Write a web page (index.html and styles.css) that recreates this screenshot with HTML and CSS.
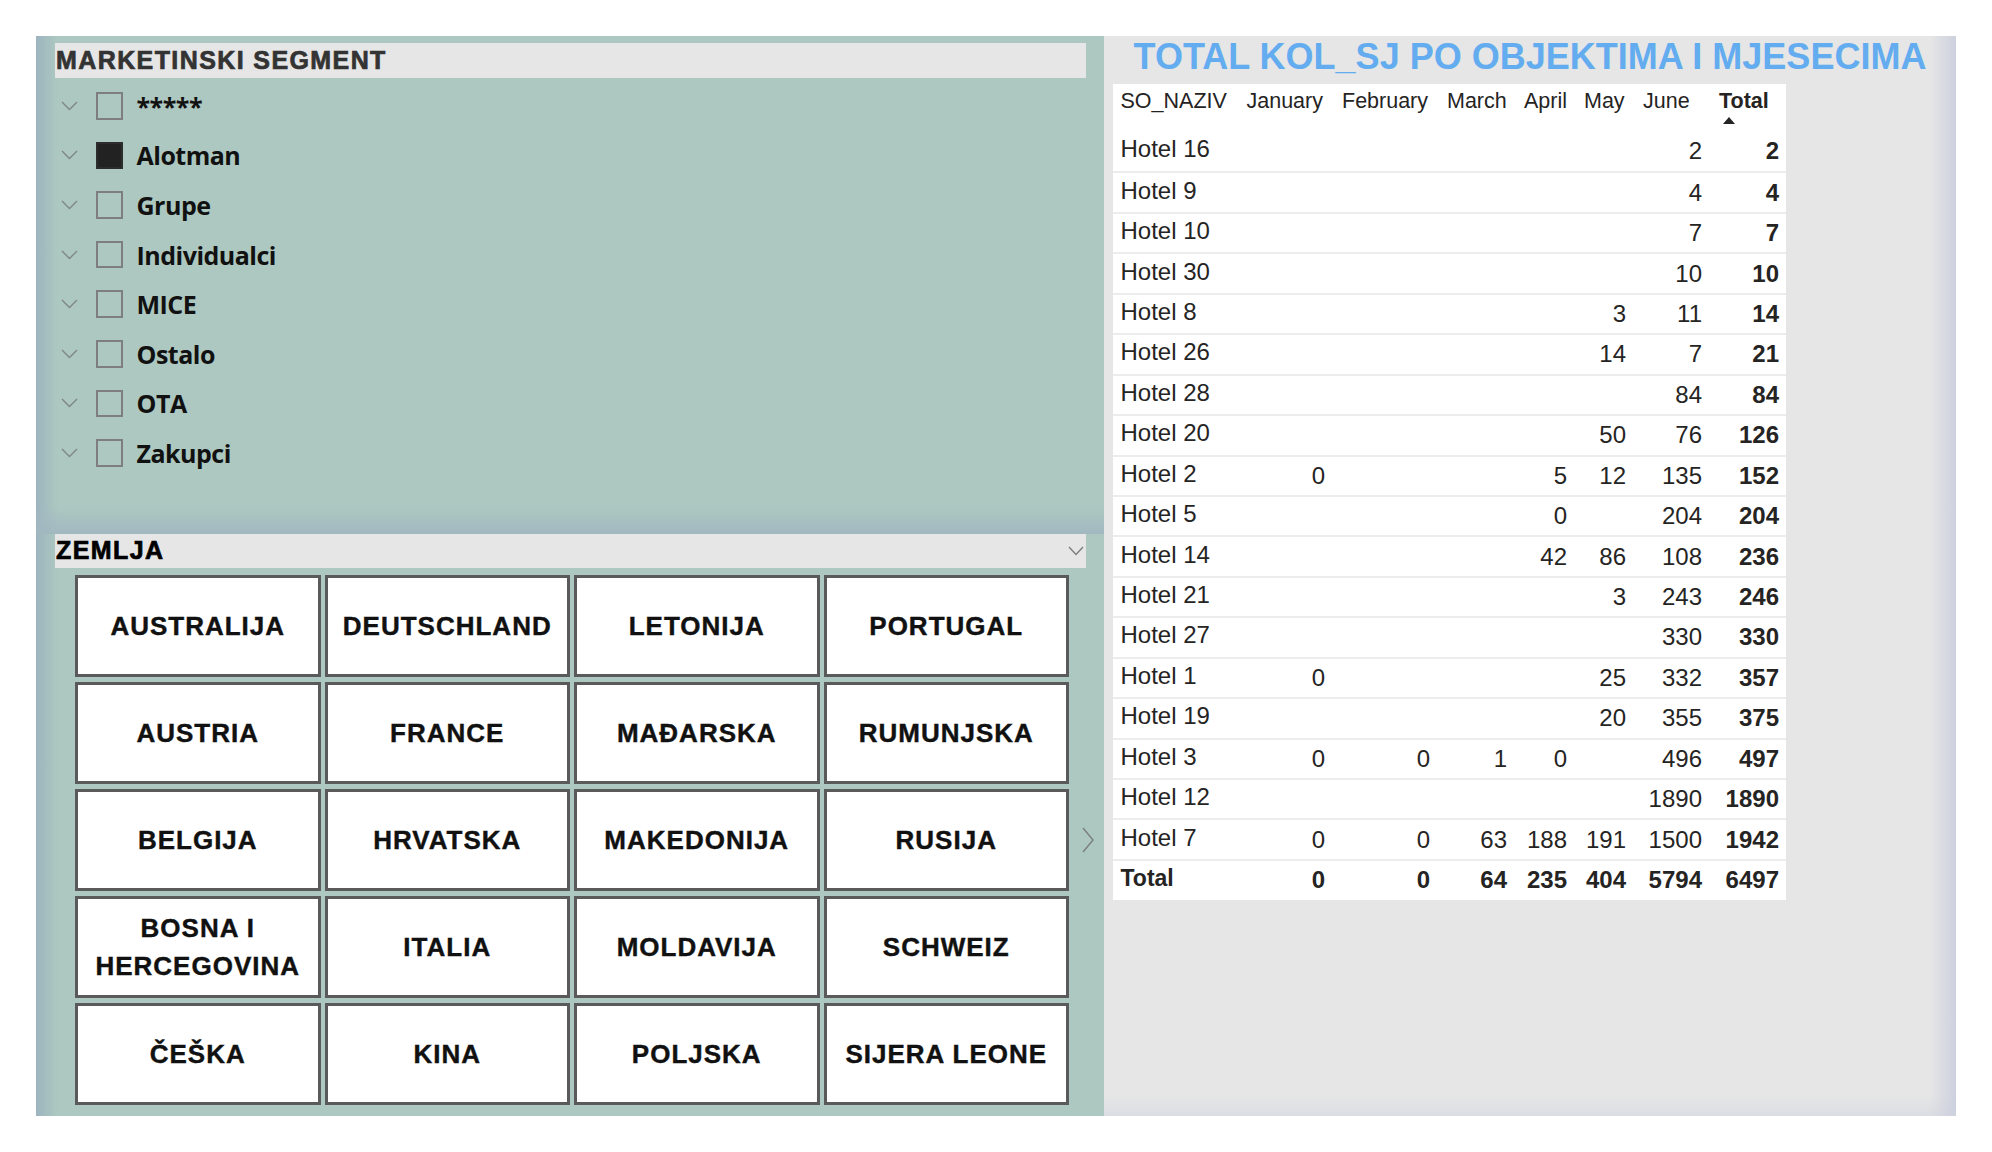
FILE: index.html
```html
<!DOCTYPE html>
<html lang="hr">
<head>
    <meta charset="UTF-8">
    <title>Total kol_sj po objektima</title>
    <link rel="stylesheet" href="styles.css">
</head>
<body>
<div class="report">

    <section class="left-panel">
        <div class="slicer segment">
            <div class="slicer-title">MARKETINSKI SEGMENT</div>
            <ul class="items">
                <li class="item"><svg class="chev" width="17" height="10" viewBox="0 0 17 10"><polyline points="1,1 8.5,8.5 16,1"/></svg><span class="box"></span><span class="label">*****</span></li>
                <li class="item"><svg class="chev" width="17" height="10" viewBox="0 0 17 10"><polyline points="1,1 8.5,8.5 16,1"/></svg><span class="box checked"></span><span class="label">Alotman</span></li>
                <li class="item"><svg class="chev" width="17" height="10" viewBox="0 0 17 10"><polyline points="1,1 8.5,8.5 16,1"/></svg><span class="box"></span><span class="label">Grupe</span></li>
                <li class="item"><svg class="chev" width="17" height="10" viewBox="0 0 17 10"><polyline points="1,1 8.5,8.5 16,1"/></svg><span class="box"></span><span class="label">Individualci</span></li>
                <li class="item"><svg class="chev" width="17" height="10" viewBox="0 0 17 10"><polyline points="1,1 8.5,8.5 16,1"/></svg><span class="box"></span><span class="label">MICE</span></li>
                <li class="item"><svg class="chev" width="17" height="10" viewBox="0 0 17 10"><polyline points="1,1 8.5,8.5 16,1"/></svg><span class="box"></span><span class="label">Ostalo</span></li>
                <li class="item"><svg class="chev" width="17" height="10" viewBox="0 0 17 10"><polyline points="1,1 8.5,8.5 16,1"/></svg><span class="box"></span><span class="label">OTA</span></li>
                <li class="item"><svg class="chev" width="17" height="10" viewBox="0 0 17 10"><polyline points="1,1 8.5,8.5 16,1"/></svg><span class="box"></span><span class="label">Zakupci</span></li>
            </ul>
        </div>

        <div class="slicer country">
            <div class="slicer-title dark">
                <span>ZEMLJA</span>
                <svg class="chev small" width="16" height="10" viewBox="0 0 16 10"><polyline points="1,1 8,8.5 15,1"/></svg>
            </div>
            <div class="tiles-row">
                <div class="tiles">
                    <div class="tile">AUSTRALIJA</div>
                    <div class="tile">DEUTSCHLAND</div>
                    <div class="tile">LETONIJA</div>
                    <div class="tile">PORTUGAL</div>
                    <div class="tile">AUSTRIA</div>
                    <div class="tile">FRANCE</div>
                    <div class="tile">MAĐARSKA</div>
                    <div class="tile">RUMUNJSKA</div>
                    <div class="tile">BELGIJA</div>
                    <div class="tile">HRVATSKA</div>
                    <div class="tile">MAKEDONIJA</div>
                    <div class="tile">RUSIJA</div>
                    <div class="tile">BOSNA I HERCEGOVINA</div>
                    <div class="tile">ITALIA</div>
                    <div class="tile">MOLDAVIJA</div>
                    <div class="tile">SCHWEIZ</div>
                    <div class="tile">ČEŠKA</div>
                    <div class="tile">KINA</div>
                    <div class="tile">POLJSKA</div>
                    <div class="tile">SIJERA LEONE</div>
                </div>
                <svg class="next" width="12" height="26" viewBox="0 0 12 26"><polyline points="1,1 11,13 1,25"/></svg>
            </div>
        </div>
    </section>

    <section class="right-panel">
        <h1 class="title">TOTAL KOL_SJ PO OBJEKTIMA I MJESECIMA</h1>
        <table class="matrix">
            <colgroup>
                <col class="c-name">
                <col class="c-jan">
                <col class="c-feb">
                <col class="c-mar">
                <col class="c-apr">
                <col class="c-may">
                <col class="c-jun">
                <col class="c-tot">
            </colgroup>
            <thead>
                <tr>
                    <th class="name">SO_NAZIV</th>
                    <th>January</th>
                    <th>February</th>
                    <th>March</th>
                    <th>April</th>
                    <th>May</th>
                    <th>June</th>
                    <th class="total">Total<span class="sort-up"></span></th>
                </tr>
            </thead>
            <tbody>
                <tr><td class="name">Hotel 16</td><td></td><td></td><td></td><td></td><td></td><td>2</td><td class="sum">2</td></tr>
                <tr><td class="name">Hotel 9</td><td></td><td></td><td></td><td></td><td></td><td>4</td><td class="sum">4</td></tr>
                <tr><td class="name">Hotel 10</td><td></td><td></td><td></td><td></td><td></td><td>7</td><td class="sum">7</td></tr>
                <tr><td class="name">Hotel 30</td><td></td><td></td><td></td><td></td><td></td><td>10</td><td class="sum">10</td></tr>
                <tr><td class="name">Hotel 8</td><td></td><td></td><td></td><td></td><td>3</td><td>11</td><td class="sum">14</td></tr>
                <tr><td class="name">Hotel 26</td><td></td><td></td><td></td><td></td><td>14</td><td>7</td><td class="sum">21</td></tr>
                <tr><td class="name">Hotel 28</td><td></td><td></td><td></td><td></td><td></td><td>84</td><td class="sum">84</td></tr>
                <tr><td class="name">Hotel 20</td><td></td><td></td><td></td><td></td><td>50</td><td>76</td><td class="sum">126</td></tr>
                <tr><td class="name">Hotel 2</td><td>0</td><td></td><td></td><td>5</td><td>12</td><td>135</td><td class="sum">152</td></tr>
                <tr><td class="name">Hotel 5</td><td></td><td></td><td></td><td>0</td><td></td><td>204</td><td class="sum">204</td></tr>
                <tr><td class="name">Hotel 14</td><td></td><td></td><td></td><td>42</td><td>86</td><td>108</td><td class="sum">236</td></tr>
                <tr><td class="name">Hotel 21</td><td></td><td></td><td></td><td></td><td>3</td><td>243</td><td class="sum">246</td></tr>
                <tr><td class="name">Hotel 27</td><td></td><td></td><td></td><td></td><td></td><td>330</td><td class="sum">330</td></tr>
                <tr><td class="name">Hotel 1</td><td>0</td><td></td><td></td><td></td><td>25</td><td>332</td><td class="sum">357</td></tr>
                <tr><td class="name">Hotel 19</td><td></td><td></td><td></td><td></td><td>20</td><td>355</td><td class="sum">375</td></tr>
                <tr><td class="name">Hotel 3</td><td>0</td><td>0</td><td>1</td><td>0</td><td></td><td>496</td><td class="sum">497</td></tr>
                <tr><td class="name">Hotel 12</td><td></td><td></td><td></td><td></td><td></td><td>1890</td><td class="sum">1890</td></tr>
                <tr><td class="name">Hotel 7</td><td>0</td><td>0</td><td>63</td><td>188</td><td>191</td><td>1500</td><td class="sum">1942</td></tr>
                <tr class="grand"><td class="name">Total</td><td>0</td><td>0</td><td>64</td><td>235</td><td>404</td><td>5794</td><td class="sum">6497</td></tr>
            </tbody>
        </table>
    </section>

</div>
</body>
</html>
```

FILE: styles.css
```css
* {
    margin: 0;
    padding: 0;
    box-sizing: border-box;
}

html, body {
    background-color: #ffffff;
    font-family: "Liberation Sans", Arial, sans-serif;
}

.report {
    display: flex;
    width: 1920px;
    height: 1080px;
    margin: 36px 0 0 36px;
}

/* left side: slicers */

.left-panel {
    width: 1068px;
    display: flex;
    flex-direction: column;
    background: linear-gradient(to right, #9db4bf 0, #adc8c0 22px);
}

.slicer {
    padding: 0 18px 0 19px;
}

.slicer.segment {
    padding-top: 7px;
    padding-bottom: 56px;
    background: linear-gradient(to bottom, rgba(160, 183, 193, 0) 0, rgba(160, 183, 193, 0) calc(100% - 28px), #a2b8c1 100%);
}

.slicer-title {
    display: flex;
    align-items: center;
    justify-content: space-between;
    height: 35px;
    padding: 0 2px 0 1px;
    background-color: #e6e6e6;
    color: #333333;
    font-size: 25px;
    font-weight: bold;
    letter-spacing: 1.4px;
    -webkit-text-stroke: 0.7px currentColor;
}

.slicer-title.dark {
    height: 34px;
    color: #000000;
}

.items {
    list-style: none;
    margin-top: 3px;
}

.item {
    display: flex;
    align-items: center;
    height: 49.6px;
    padding-left: 6px;
}

.chev {
    fill: none;
    stroke: #7f8684;
    stroke-width: 1.4;
}

.chev.small {
    stroke: #7b7f7e;
}

.box {
    width: 27.5px;
    height: 27.5px;
    margin-left: 17.5px;
    border: 2px solid #7e7e7e;
}

.box.checked {
    background-color: #222222;
    border-color: #2c2c2c;
}

.label {
    margin-left: 13.5px;
    font-family: "Open Sans", "Noto Sans", sans-serif;
    font-weight: 700;
    font-size: 25px;
    letter-spacing: -0.5px;
    color: #111111;
}

.slicer.country {
    padding-bottom: 11px;
}

.tiles-row {
    display: flex;
    align-items: center;
    margin-top: 7px;
}

.tiles {
    display: grid;
    grid-template-columns: repeat(4, 1fr);
    grid-auto-rows: 102px;
    gap: 5px 4px;
    flex-shrink: 0;
    width: 994px;
    margin-left: 20px;
}

.tile {
    display: flex;
    align-items: center;
    justify-content: center;
    padding: 0 6px;
    background-color: #ffffff;
    border: 3px solid #5a5a5a;
    color: #111111;
    font-size: 26px;
    font-weight: bold;
    letter-spacing: 1px;
    line-height: 38px;
    text-align: center;
    -webkit-text-stroke: 0.4px currentColor;
}

.next {
    flex-shrink: 0;
    margin-left: 13px;
    fill: none;
    stroke: #7a7e7d;
    stroke-width: 1.4;
}

/* right side: matrix */

.right-panel {
    width: 852px;
    padding: 1px 9px 0 9px;
    background:
        linear-gradient(to left, #cdd0de 0, rgba(230, 230, 230, 0) 26px),
        linear-gradient(to top, #dcdde3 0, rgba(230, 230, 230, 0) 20px),
        #e6e6e6;
}

.title {
    height: 40px;
    line-height: 40px;
    text-align: center;
    color: #63acef;
    font-size: 36px;
    font-weight: bold;
    white-space: nowrap;
}

.matrix {
    margin-top: 7px;
    width: 673px;
    table-layout: fixed;
    border-collapse: separate;
    border-spacing: 0;
    background-color: #ffffff;
    color: #252423;
}

.c-name { width: 123.5px; }
.c-jan { width: 95.5px; }
.c-feb { width: 105px; }
.c-mar { width: 77px; }
.c-apr { width: 60px; }
.c-may { width: 59px; }
.c-jun { width: 76px; }
.c-tot { width: 77px; }

.matrix th {
    height: 47px;
    padding: 5px 0 0 10px;
    font-size: 21.5px;
    font-weight: normal;
    line-height: 24px;
    text-align: left;
    vertical-align: top;
    white-space: nowrap;
}

.matrix th.name {
    padding-left: 7.5px;
}

.matrix th.total {
    font-weight: bold;
}

.sort-up {
    display: block;
    width: 0;
    height: 0;
    margin: 4px 0 0 4px;
    border-left: 6px solid transparent;
    border-right: 6px solid transparent;
    border-bottom: 7px solid #252423;
}

.matrix td {
    height: 40.45px;
    padding: 0 7px 0 0;
    border-top: 2px solid #ececec;
    font-size: 24px;
    text-align: right;
    vertical-align: middle;
    white-space: nowrap;
}

.matrix tbody tr:first-child td {
    border-top: 0;
}

.matrix td.name {
    padding: 0 0 4px 7.5px;
    text-align: left;
}

.matrix td.sum {
    font-weight: bold;
}

.matrix tr.grand td {
    height: 41px;
    font-weight: bold;
}

.matrix tr.grand td.name {
    font-size: 23px;
}
```
